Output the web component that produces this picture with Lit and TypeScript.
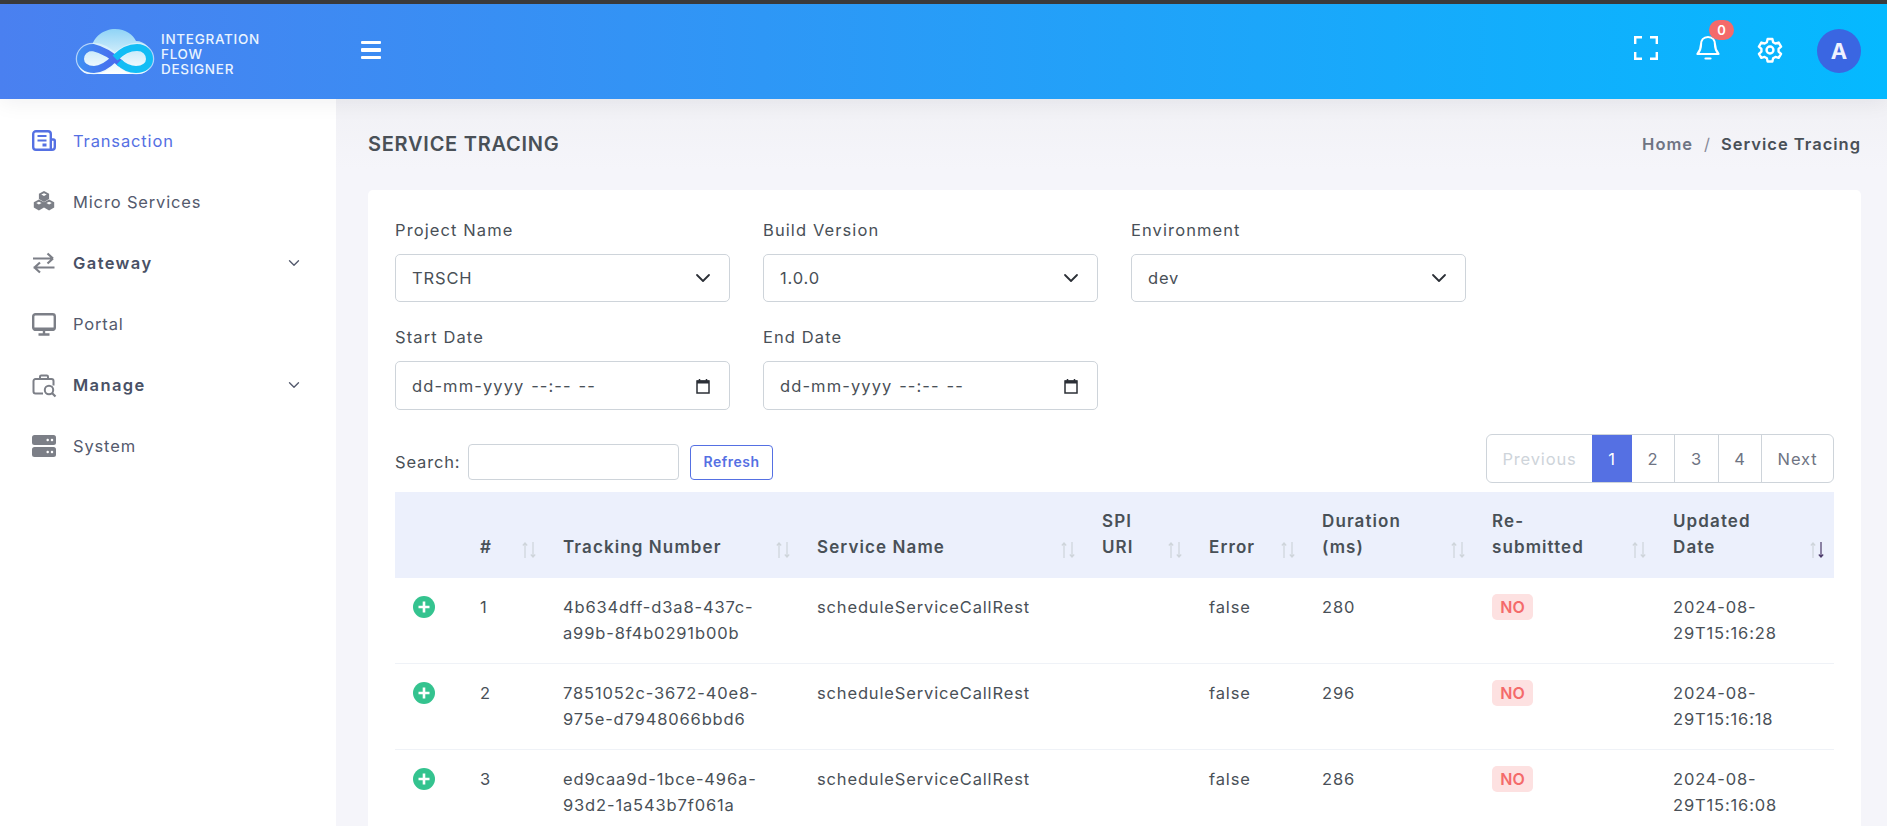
import { LitElement, html, css, svg } from "lit";
import { customElement } from "lit/decorators.js";

const COLS = [
  { w: 68, label: "" },
  { w: 83, label: "#" },
  { w: 254, label: "Tracking Number" },
  { w: 285, label: "Service Name" },
  { w: 107, label: "SPI URI" },
  { w: 113, label: "Error" },
  { w: 170, label: "Duration (ms)" },
  { w: 181, label: "Re-submitted" },
  { w: 178, label: "Updated Date" },
];

const ROWS = [
  { n: 1, id: "4b634dff-d3a8-437c-a99b-8f4b0291b00b", dur: 280, date: "2024-08-29T15:16:28" },
  { n: 2, id: "7851052c-3672-40e8-975e-d7948066bbd6", dur: 296, date: "2024-08-29T15:16:18" },
  { n: 3, id: "ed9caa9d-1bce-496a-93d2-1a543b7f061a", dur: 286, date: "2024-08-29T15:16:08" },
];

const chevron = svg`<path d="M2 5l6 6 6-6" fill="none" stroke="currentColor" stroke-width="1.8" stroke-linecap="round" stroke-linejoin="round"/>`;

const NAV_ICONS: Record<string, unknown> = {
  news: svg`<path d="M19 19.800H4a2.800 2.800 0 0 1-2.800-2.800V4A2.800 2.800 0 0 1 4 1.200h12A2.800 2.800 0 0 1 18.800 4v15.800M18.800 9.500h2.500a1.500 1.500 0 0 1 1.500 1.500v6a2.800 2.800 0 0 1-2.800 2.800H19" fill="none" stroke="currentColor" stroke-width="2.400"/><path d="M5.500 6h9M5.500 10.500h9" fill="none" stroke="currentColor" stroke-width="2.200"/><rect x="10.500" y="13.500" width="4" height="3" fill="currentColor"/>`,
  cubes: svg`<g transform="translate(1.800 0) scale(.85)"><g fill="currentColor"><path d="M12 0l6 3.200v6.300l-6 3.300-6-3.300V3.200z"/><path d="M6 10l6 3.200v6.300L6 22.800 0 19.500v-6.300z"/><path d="M18 10l6 3.200v6.300l-6 3.300-6-3.300v-6.300z"/></g><g fill="#fff"><path d="M12 2.500l3.200 1.700L12 6 8.800 4.200z"/><path d="M6 12.500l3.200 1.700L6 16l-3.200-1.800z"/><path d="M18 12.500l3.200 1.700L18 16l-3.200-1.800z"/></g></g>`,
  swap: svg`<path d="M1 6.500h20M15.500 1.500L21 6.500M15.500 11.500L21 6.500M1.500 15.500h21M8 10.500L2.500 15.500M8 20.500L2.500 15.500" fill="none" stroke="currentColor" stroke-width="2.200"/>`,
  monitor: svg`<rect x="1.200" y="1.200" width="21.600" height="15.600" rx="2.200" fill="none" stroke="currentColor" stroke-width="2.400"/><path d="M12 17v4M6.500 21.500h11" stroke="currentColor" stroke-width="2.400" fill="none"/><path d="M1.500 14.500h21v1.500a2 2 0 0 1-2 2h-17a2 2 0 0 1-2-2z" fill="currentColor"/>`,
  manage: svg`<path d="M11 19.500H3.500a2 2 0 0 1-2-2V7a2 2 0 0 1 2-2h16a2 2 0 0 1 2 2v4.500M8 5V2.700A1.200 1.200 0 0 1 9.200 1.500h5.600A1.200 1.200 0 0 1 16 2.700V5" fill="none" stroke="currentColor" stroke-width="2"/><circle cx="17" cy="16" r="4.200" fill="#fff" stroke="currentColor" stroke-width="2"/><path d="M20 19l3.500 3.500" stroke="currentColor" stroke-width="2.200" fill="none"/>`,
  server: svg`<rect x="0" y="0" width="24" height="10" rx="2.500" fill="currentColor"/><rect x="0" y="12" width="24" height="10" rx="2.500" fill="currentColor"/><g fill="#fff"><rect x="14.500" y="3.800" width="2.400" height="2.400" rx="1"/><rect x="18.800" y="3.800" width="2.400" height="2.400" rx="1"/><rect x="14.500" y="15.800" width="2.400" height="2.400" rx="1"/><rect x="18.800" y="15.800" width="2.400" height="2.400" rx="1"/></g>`,
};

const NAV = [
  { icon: "news", label: "Transaction", active: true },
  { icon: "cubes", label: "Micro Services" },
  { icon: "swap", label: "Gateway", group: true },
  { icon: "monitor", label: "Portal" },
  { icon: "manage", label: "Manage", group: true },
  { icon: "server", label: "System" },
];

@customElement("app-root")
export class AppRoot extends LitElement {
  static styles = css`
    :host {
      display: block;
      height: 100vh;
      overflow: hidden;
      background: #f5f5fa;
      font-family: "Inter", "Open Sans", sans-serif;
      font-size: 16.5px;
      line-height: 26px;
      color: #495057;
      letter-spacing: 0.85px;
    }
    * { box-sizing: border-box; }
    .chrome { height: 4px; background: #3c3c3c; }
    .top {
      position: relative;
      z-index: 2;
      height: 95px;
      display: flex;
      align-items: center;
      background: linear-gradient(to right, #4a80f0, #05b9ff);
      box-shadow: 0 2px 22px rgba(30, 32, 37, 0.07);
      color: #fff;
    }
    .brand { display: flex; align-items: center; width: 361px; padding-left: 75px; flex: none; }
    .logo { width: 80px; height: 50px; flex: none; display: block; }
    .brand-text {
      margin: 6px 0 0 6px;
      font-size: 13.5px;
      line-height: 15px;
      font-weight: 500;
      letter-spacing: 0.7px;
      color: #eaf4ff;
    }
    .burger { display: flex; flex-direction: column; gap: 4px; width: 20px; margin-bottom: 3px; }
    .burger i { display: block; height: 3.500px; background: #fff; border-radius: 1px; }
    .tools { margin-left: auto; display: flex; align-items: center; padding-right: 26px; }
    .tool { display: block; flex: none; }
    .fs { width: 24px; height: 24px; margin: 0 38px 7px 0; }
    .bell { position: relative; width: 24px; height: 26px; margin: 0 37px 8px 0; }
    .bell svg { display: block; width: 24px; height: 26px; }
    .badge {
      position: absolute;
      left: 13px;
      top: -15px;
      width: 25px;
      height: 20px;
      border-radius: 10px;
      background: #f46a6a;
      color: #fff;
      font-size: 13px;
      font-weight: 600;
      line-height: 20px;
      text-align: center;
      letter-spacing: 0;
    }
    .gear { width: 26px; height: 26px; margin: 0 34px 4px 0; }
    .avatar {
      width: 44px;
      height: 44px;
      margin-bottom: 2px;
      border-radius: 50%;
      background: #3a66e2;
      color: #eef2ff;
      font-size: 22px;
      font-weight: 700;
      line-height: 44px;
      text-align: center;
      letter-spacing: 0;
    }
    .body { display: flex; height: 727px; }
    .side {
      flex: none;
      width: 336px;
      background: #fff;
      padding-top: 11px;
    }
    .nav-item {
      height: 61px;
      display: flex;
      align-items: center;
      padding: 0 36px 0 32px;
      color: #545a6d;
    }
    .nav-icon { flex: none; width: 24px; height: 22px; margin-right: 17px; color: #7c7f87; display: block; overflow: visible; }
    .nav-item.active { color: #5570e3; }
    .nav-item.active .nav-icon { color: #5570e3; }
    .nav-item.group { font-weight: 600; color: #495165; letter-spacing: 1.4px; }
    .nav-chev { margin-left: auto; width: 12px; height: 12px; color: #545a6d; display: block; }
    .main { flex: 1; min-width: 0; padding: 0 26px 0 32px; background: linear-gradient(to bottom, #f1f1f5, #f5f5fa 70px); }
    .title-row { height: 91px; display: flex; align-items: center; justify-content: space-between; padding-bottom: 1px; }
    .title { margin: 0; font-size: 20px; font-weight: 600; letter-spacing: 0.75px; color: #495057; }
    .crumbs { display: flex; align-items: center; font-weight: 600; letter-spacing: 1px; }
    .crumbs .home { color: #6f7483; }
    .crumbs .sep { color: #878a99; font-weight: 400; margin: 0 10px 0 11px; }
    .card { background: #fff; border-radius: 5px; padding: 28px 27px 0; }
    .grid { display: grid; grid-template-columns: repeat(4, 335px); column-gap: 33px; row-gap: 23px; }
    .label { display: block; height: 24px; line-height: 24px; margin-bottom: 12px; color: #495057; letter-spacing: 1.1px; }
    .control {
      height: 48px;
      border: 1px solid #ced4da;
      border-radius: 5px;
      padding: 0 16px;
      display: flex;
      align-items: center;
      justify-content: space-between;
      color: #495057;
      background: #fff;
    }
    .control.date { height: 49px; letter-spacing: 1.1px; word-spacing: 1px; }
    .control svg { width: 16px; height: 16px; color: #2b2f36; flex: none; display: block; margin-right: 2px; }
    .toolbar { display: flex; justify-content: space-between; align-items: flex-start; margin-top: 24px; }
    .search { display: flex; align-items: center; margin-top: 10px; }
    .search .lbl { width: 66px; flex: none; white-space: nowrap; }
    .search .box { width: 211px; height: 36px; border: 1px solid #ced4da; border-radius: 4px; margin-left: 7px; background: #fff; }
    .refresh {
      margin-left: 11px;
      width: 83px;
      height: 35px;
      border: 1px solid #5570e3;
      border-radius: 4px;
      background: #fff;
      color: #5570e3;
      font: inherit;
      font-size: 14px;
      font-weight: 600;
      letter-spacing: 0.5px;
      padding: 0;
    }
    .pager { display: flex; width: 348px; height: 49px; border: 1px solid #ced4da; border-radius: 6px; overflow: hidden; }
    .pager span { display: flex; align-items: center; justify-content: center; border-left: 1px solid #ced4da; color: #6f7483; }
    .pager span:first-child { border-left: 0; }
    .pager .prev { width: 105px; color: #ced4da; }
    .pager .on { width: 40px; background: #5570e3; color: #fff; border-left: 0; }
    .pager .p2 { width: 42px; border-left: 0; }
    .pager .p3 { width: 44px; }
    .pager .p4 { width: 43px; }
    .pager .next { flex: 1; }
    table { width: 1439px; border-collapse: separate; border-spacing: 0; table-layout: fixed; margin-top: 9px; }
    th {
      position: relative;
      height: 86px;
      background: #ecf0fc;
      padding: 0 60px 18px 17px;
      text-align: left;
      vertical-align: bottom;
      font-size: 17px;
      font-weight: 600;
      letter-spacing: 1.1px;
      color: #495057;
    }
    td { height: 86px; padding: 16px 17px 0; vertical-align: top; border-bottom: 1px solid #eff2f7; }
    .wrap { overflow-wrap: anywhere; }
    .sort { position: absolute; right: 9px; bottom: 20px; width: 16px; height: 16px; display: block; }
    .plus { display: block; width: 22px; height: 22px; margin: 2px 0 0 1px; }
    .no {
      display: inline-block;
      height: 26px;
      width: 41px;
      border-radius: 5px;
      background: #fde1e1;
      color: #f46a6a;
      font-weight: 600;
      line-height: 26px;
      font-size: 16px;
      letter-spacing: 0;
      text-align: center;
    }
  `;

  private sortIcon(active: boolean) {
    return html`<svg class="sort" viewBox="0 0 16 16" fill="none" stroke-width="1.200">
      <path d="M4 16V1M1.800 3.500L4 1l2.200 2.500" stroke="#ced4da"/>
      <path d="M12 0v15M9.800 12.500L12 15l2.200-2.500" stroke=${active ? "#4b3a6a" : "#ced4da"}/>
    </svg>`;
  }

  render() {
    return html`
      <div class="chrome"></div>
      <header class="top">
        <div class="brand">
          <svg class="logo" viewBox="0 0 80 50" aria-hidden="true">
            <defs>
              <linearGradient id="cl" x1="0" y1="0" x2="0" y2="1">
                <stop offset="0" stop-color="#8fd3f6"/>
                <stop offset="0.6" stop-color="#d8f0fb"/>
                <stop offset="1" stop-color="#ffffff"/>
              </linearGradient>
              <linearGradient id="lf" x1="0" y1="0" x2="1" y2="0">
                <stop offset="0" stop-color="#3f8df2"/>
                <stop offset="1" stop-color="#4a66ee"/>
              </linearGradient>
            </defs>
            <path d="M15 47C6 47 2 39 3 32C4 25 10 21 17 20C18 10 29 2 40 2C51 2 58 8 61 14C70 14 77 22 77 32C77 41 71 47 63 47Z" fill="url(#cl)"/>
            <path d="M40 31C33 24 26 20 18 20C10 20 5 26 5 32C5 38 11 43 19 43C27 43 33 38 40 31" fill="none" stroke="#dff3fd" stroke-width="8.500" opacity=".7"/>
            <path d="M40 31C47 24 54 20 62 20C70 20 75 26 75 32C75 38 69 43 61 43C53 43 47 38 40 31" fill="none" stroke="#dff3fd" stroke-width="8.500" opacity=".7"/>
            <path d="M46 37C42 33 33 24 18 20.500C10 20.500 5.500 26 5.500 32C5.500 38 11 42.500 19 42.500C27 42.500 33 38 40 31" fill="none" stroke="url(#lf)" stroke-width="7"/>
            <path d="M40 31C47 24 54 20.500 62 20.500C70 20.500 74.500 26 74.500 32C74.500 38 69 42.500 61 42.500C53 42.500 48 39 44 35" fill="none" stroke="#12bdf5" stroke-width="7"/>
          </svg>
          <div class="brand-text">INTEGRATION<br />FLOW<br />DESIGNER</div>
        </div>
        <div class="burger"><i></i><i></i><i></i></div>
        <div class="tools">
          <svg class="tool fs" viewBox="0 0 24 24" fill="none" stroke="#fff" stroke-width="2.400">
            <path d="M1.200 8V1.200H8M16 1.200h6.800V8M22.800 16v6.800H16M8 22.800H1.200V16"/>
          </svg>
          <div class="bell">
            <svg viewBox="0 0 24 26" fill="none" stroke="#fff" stroke-width="2.200" stroke-linejoin="round" stroke-linecap="round">
              <path d="M12 2c-4.500 0-7 3.500-7 7.500 0 5-1.500 7-3.500 9.500h21c-2-2.500-3.500-4.500-3.500-9.500C19 5.500 16.500 2 12 2z"/>
              <path d="M9.500 23.500h5"/>
            </svg>
            <span class="badge">0</span>
          </div>
          <svg class="tool gear" viewBox="0 0 24 24" fill="none" stroke="#fff" stroke-width="2.200" stroke-linejoin="round">
            <circle cx="12" cy="12" r="3.200"/>
            <path d="M9.800 1.800h4.400l.7 3 2.100 1.200 3-.9 2.200 3.800-2.300 2.100v2.400l2.300 2.100-2.200 3.800-3-.9-2.100 1.200-.7 3H9.800l-.7-3L7 18.400l-3 .9-2.200-3.800 2.300-2.100V11L1.800 8.900 4 5.100l3 .9 2.100-1.200z"/>
          </svg>
          <div class="avatar">A</div>
        </div>
      </header>
      <div class="body">
        <nav class="side">
          ${NAV.map(
            (n) => html`
              <div class="nav-item ${n.active ? "active" : ""} ${n.group ? "group" : ""}">
                <svg class="nav-icon" viewBox="0 0 24 22">${NAV_ICONS[n.icon]}</svg>
                <span>${n.label}</span>
                ${n.group ? html`<svg class="nav-chev" viewBox="0 0 16 16">${chevron}</svg>` : ""}
              </div>
            `
          )}
        </nav>
        <main class="main">
          <div class="title-row">
            <h1 class="title">SERVICE TRACING</h1>
            <div class="crumbs"><span class="home">Home</span><span class="sep">/</span><span>Service Tracing</span></div>
          </div>
          <section class="card">
            <div class="grid">
              ${[
                ["Project Name", "TRSCH"],
                ["Build Version", "1.0.0"],
                ["Environment", "dev"],
              ].map(
                ([l, v]) => html`
                  <div>
                    <span class="label">${l}</span>
                    <div class="control"><span>${v}</span><svg viewBox="0 0 16 16">${chevron}</svg></div>
                  </div>
                `
              )}
              ${["Start Date", "End Date"].map(
                (l, i) => html`
                  <div style=${`grid-column:${i + 1}`}>
                    <span class="label">${l}</span>
                    <div class="control date">
                      <span>dd-mm-yyyy --:-- --</span>
                      <svg viewBox="0 0 16 16" fill="none" stroke="currentColor">
                        <rect x="2" y="3" width="12" height="12" stroke-width="1.500"/>
                        <rect x="2" y="2.500" width="12" height="3" fill="currentColor" stroke="none"/>
                        <path d="M4.500 1v2M11.500 1v2" stroke-width="1.500"/>
                      </svg>
                    </div>
                  </div>
                `
              )}
            </div>
            <div class="toolbar">
              <div class="search">
                <span class="lbl">Search:</span>
                <div class="box"></div>
                <button class="refresh">Refresh</button>
              </div>
              <div class="pager">
                <span class="prev">Previous</span>
                <span class="on">1</span>
                <span class="p2">2</span>
                <span class="p3">3</span>
                <span class="p4">4</span>
                <span class="next">Next</span>
              </div>
            </div>
            <table>
              <colgroup>${COLS.map((c) => html`<col style=${`width:${c.w}px`} />`)}</colgroup>
              <thead>
                <tr>
                  ${COLS.map(
                    (c, i) => html`<th>${c.label}${i > 0 ? this.sortIcon(i === COLS.length - 1) : ""}</th>`
                  )}
                </tr>
              </thead>
              <tbody>
                ${ROWS.map(
                  (r) => html`
                    <tr>
                      <td>
                        <svg class="plus" viewBox="0 0 22 22">
                          <circle cx="11" cy="11" r="11" fill="#34c38f"/>
                          <path d="M11 5.500v11M5.500 11h11" stroke="#fff" stroke-width="2.600"/>
                        </svg>
                      </td>
                      <td>${r.n}</td>
                      <td class="wrap">${r.id}</td>
                      <td>scheduleServiceCallRest</td>
                      <td></td>
                      <td>false</td>
                      <td>${r.dur}</td>
                      <td><span class="no">NO</span></td>
                      <td>${r.date}</td>
                    </tr>
                  `
                )}
              </tbody>
            </table>
          </section>
        </main>
      </div>
    `;
  }
}
